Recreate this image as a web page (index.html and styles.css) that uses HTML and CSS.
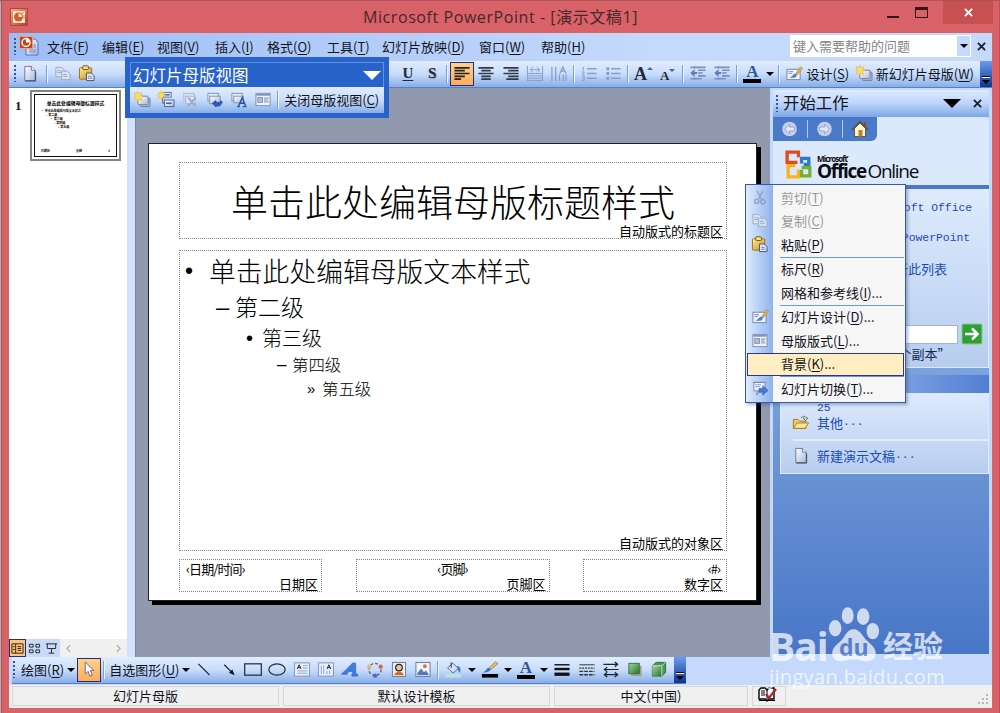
FILE: index.html
```
<!DOCTYPE html>
<html lang="zh-CN">
<head>
  <meta charset="UTF-8" />
  <meta name="viewport" content="width=device-width, initial-scale=1.0" />
  <title>Microsoft PowerPoint - [演示文稿1]</title>
  <link rel="stylesheet" href="styles.css">
</head>
<body>
  <!-- Icon sprite -->
  <svg class="sprite" xmlns="http://www.w3.org/2000/svg">
    <defs>
      <linearGradient id="gold" x1="0" y1="0" x2="1" y2="1"><stop offset="0" stop-color="#ffe98c"/><stop offset="1" stop-color="#d0901c"/></linearGradient>
      <linearGradient id="sheet" x1="0" y1="0" x2="1" y2="1"><stop offset="0" stop-color="#fff"/><stop offset="1" stop-color="#a9b9dc"/></linearGradient>
      <linearGradient id="green" x1="0" y1="0" x2="1" y2="1"><stop offset="0" stop-color="#a5d6a0"/><stop offset="1" stop-color="#27702c"/></linearGradient>
      <linearGradient id="red" x1="0" y1="0" x2="1" y2="1"><stop offset="0" stop-color="#f6b18b"/><stop offset="1" stop-color="#b8391a"/></linearGradient>
    </defs>
    <symbol id="i-app" viewBox="0 0 18 18"><rect x=".5" y=".5" width="17" height="17" fill="url(#red)" stroke="#b04a30"/><rect x="3" y="3" width="12" height="12" fill="#fbe6da"/><circle cx="8.5" cy="9" r="4.5" fill="#d35f2c"/><path d="M8.5 9V5.500A3.500 3.500 0 0 1 12 9z" fill="#ffe2c8"/><path d="M11 5h3M13 8h2M13 10h2" stroke="#d0805c"/></symbol>
    <symbol id="i-ppt" viewBox="0 0 20 20"><path d="M7 3h9l3 3v13H7z" fill="url(#sheet)" stroke="#5577b5"/><path d="M12 9h5M12 11h5M10 14h7M10 16h7" stroke="#6f90cb"/><rect x=".5" y=".5" width="13" height="12" fill="#c8431c" stroke="#f0a080"/><circle cx="7" cy="6.500" r="4" fill="none" stroke="#fff" stroke-width="1.500"/><path d="M7 6.500V3a3.500 3.500 0 0 1 3.500 3.500z" fill="#fff"/></symbol>
    <symbol id="i-new" viewBox="0 0 18 18"><path d="M3.500 1.500h7l4 4v11h-11z" fill="url(#sheet)" stroke="#6a7590"/><path d="M10.500 1.500v4h4" fill="#fff" stroke="#6a7590"/><path d="M4 17h11V7" fill="none" stroke="#3b4660"/></symbol>
    <symbol id="i-copy" viewBox="0 0 18 18"><g fill="#dbe3f3" stroke="#9aa7c4"><path d="M1.500 2.500h6l3 3v7h-9z"/><path d="M7.500 6.500h6l3 3v6h-9z"/></g><path d="M3 6h4M3 8h4M9 10h4M9 12h5" stroke="#9aa7c4"/></symbol>
    <symbol id="i-paste" viewBox="0 0 18 18"><rect x="1" y="3" width="13" height="12" rx="1" fill="url(#gold)" stroke="#9b701c"/><rect x="4.500" y=".8" width="6" height="4" rx="1" fill="#f6df88" stroke="#705418"/><path d="M8.500 8.500h5l3 3v5h-8z" fill="#e4ebf8" stroke="#45557d"/><path d="M10 12h4M10 14h5" stroke="#7187b5"/></symbol>
    <symbol id="i-cut" viewBox="0 0 18 18"><path d="M6 2l4.500 9M12 2L7.500 11" stroke="#8e9fc2" stroke-width="1.600" fill="none"/><g fill="none" stroke="#8e9fc2" stroke-width="1.700"><circle cx="5.500" cy="13" r="2.200"/><circle cx="12" cy="13.500" r="2.200"/></g></symbol>
    <symbol id="i-newmaster" viewBox="0 0 18 18"><rect x="7.500" y="7.500" width="10" height="9" rx="1" fill="#aebbd6" stroke="#6c7b9e"/><rect x="4.500" y="5.500" width="11" height="9" rx="1" fill="url(#sheet)" stroke="#71809f"/><path d="M4.500 0l1.200 3 3-1.200L7.500 4.700l3 1-3 1.200 1.200 3-3-1.200-1.200 2.500-1-2.600L.7 9.500 2 6.600 0 5.500 2 4.500 .8 1.800l2.800 1z" fill="#ffdc62" stroke="#e2a92b" stroke-width=".5"/></symbol>
    <symbol id="i-newtitle" viewBox="0 0 18 18"><rect x="6.500" y="1.500" width="8" height="5" fill="#e8eefb" stroke="#5b6f9c"/><path d="M5.500 7v6h2" stroke="#445f98" fill="none"/><rect x="7.500" y="9.500" width="10" height="7" fill="url(#sheet)" stroke="#53648c"/><path d="M9 13h6M8 4h5" stroke="#4468a8" stroke-width="1.500"/><path d="M4 0l1 2.300 2.500-1-1.200 2.500 2.200 1-2.500.8 1 2.400-2.200-1L4 9 3 6.800.8 8l1-2.500L0 4.500l2-.8-1-2.500 2.200 1z" fill="#ffdc62" stroke="#e2a92b" stroke-width=".5"/></symbol>
    <symbol id="i-delmaster" viewBox="0 0 18 18"><g fill="#dde5f5" stroke="#a8b4cd"><rect x="2.500" y="2.500" width="11" height="8"/><rect x="4.500" y="5.500" width="10" height="8"/></g><path d="M7 7l8 9M15 7l-8 9" stroke="#9aa9c8" stroke-width="2"/></symbol>
    <symbol id="i-keep" viewBox="0 0 18 18"><rect x="1.500" y="2.500" width="11" height="8" fill="#e6ecf8" stroke="#8190b0"/><rect x="3.500" y="5.500" width="11" height="8" fill="url(#sheet)" stroke="#8190b0"/><path d="M6 13l4-3v2h5v-2l2 2-3 4h-4v1z" fill="#2e5fb8" stroke="#173e88" stroke-width=".6"/></symbol>
    <symbol id="i-rename" viewBox="0 0 18 18"><rect x="1.500" y="2.500" width="11" height="8" fill="#e6ecf8" stroke="#8190b0"/><rect x="3.500" y="5.500" width="10" height="7" fill="url(#sheet)" stroke="#8190b0"/><path d="M7 16.500h3M13 16.500h4M8.500 16l4-9 3.500 9M10 13h5" fill="none" stroke="#2858a5" stroke-width="1.500"/></symbol>
    <symbol id="i-layout" viewBox="0 0 18 18"><rect x="1.500" y="2.500" width="15" height="13" fill="#edf2fc" stroke="#7f8dac"/><path d="M2 4h14" stroke="#8494b8" stroke-width="2"/><rect x="3.500" y="7" width="5" height="5" fill="#b1bfdf" stroke="#8191b6"/><path d="M10 7.500h5M10 9.500h4M10 11.500h5" stroke="#7788af"/></symbol>
    <symbol id="i-design" viewBox="0 0 18 18"><path d="M1.500 4.500h14v11h-14z" fill="#eef3fd" stroke="#7083ac"/><path d="M3 7h5M3 9h4" stroke="#8ba1ca" stroke-width="1.300"/><path d="M4 13c3 0 4-4 7-4l1 2c-1 3-5 3-8 2z" fill="#4d80d4"/><path d="M11 9l5-7 2 1.500-5.500 7z" fill="#e9b450" stroke="#a0762b" stroke-width=".6"/></symbol>
    <symbol id="i-trans" viewBox="0 0 18 18"><path d="M2.500 2.500h12v9h-12zM1.500 2.500h14M8 12l-3 4M6 12v4" fill="#e9effa" stroke="#7889ad"/><path d="M4 5h6M4 7h5" stroke="#8ea0c6"/><path d="M8 9h4V6l5.500 5-5.500 5v-3H8z" fill="#457bd6" stroke="#2956a6" stroke-width=".6"/></symbol>
    <symbol id="i-left" viewBox="0 0 18 18"><path d="M1 3h16M1 6h11M1 9h16M1 12h11M1 15h7" stroke="#222" stroke-width="1.700"/></symbol>
    <symbol id="i-center" viewBox="0 0 18 18"><path d="M1 3h16M4 6h10M1 9h16M4 12h10M4 15h10" stroke="#33394a" stroke-width="1.700"/></symbol>
    <symbol id="i-right" viewBox="0 0 18 18"><path d="M1 3h16M6 6h11M1 9h16M6 12h11M4 15h13" stroke="#33394a" stroke-width="1.700"/></symbol>
    <symbol id="i-dist" viewBox="0 0 18 18"><path d="M1 1v16M17 1v16M1 9h16M1 11.500h16M1 14h16M1 16.500h16M4 5h10M4 5l3-3M4 5l3 3M14 5l-3-3M14 5l-3 3" stroke="#8b9bc6" fill="none"/></symbol>
    <symbol id="i-vert" viewBox="0 0 18 18"><path d="M1.500 2v15M5.500 2v15M9.500 10v7M13.500 10v7M16.500 10v7M10 9l3-7 3.500 7M11 6.500h4.500" stroke="#8b9bc6" stroke-width="1.300" fill="none"/></symbol>
    <symbol id="i-num" viewBox="0 0 18 18"><path d="M7 4h10M7 9h10M7 14h10" stroke="#8b9bc6" stroke-width="1.500"/><path d="M3 2v4M1.500 7.500H4L2 10.500h2.500M1.500 12.500H4v4H1.500M2 14.500h2" stroke="#8b9bc6" fill="none"/></symbol>
    <symbol id="i-bul" viewBox="0 0 18 18"><path d="M7 4h10M7 9h10M7 14h10" stroke="#8b9bc6" stroke-width="1.500"/><path d="M2 4h3M2 9h3M2 14h3" stroke="#8b9bc6" stroke-width="3"/></symbol>
    <symbol id="i-outdent" viewBox="0 0 18 18"><path d="M1 2.500h16M9 5.500h8M9 8.500h5M9 11.500h8M1 14.500h12" stroke="#7c8fbd" stroke-width="1.700"/><path d="M5.500 1v16" stroke="#7c8fbd" stroke-dasharray="1 1"/><path d="M1 8.500l4-4v3h3v2H5v3z" fill="#6479b0"/></symbol>
    <symbol id="i-home" viewBox="0 0 18 18"><path d="M13 2h2v5h-2z" fill="#9c4427"/><path d="M3.500 8v8.500h11V8L9 3z" fill="#fff4c8" stroke="#5f5a4d"/><path d="M1 10l8-8 8 8" fill="none" stroke="#5b4d3e" stroke-width="1.600"/><rect x="7.500" y="10" width="4" height="6.500" fill="#b98137"/></symbol>
    <symbol id="i-nav" viewBox="0 0 18 18"><circle cx="9" cy="9" r="7.500" fill="#c3d0e8"/><path d="M9 4L4 9l5 5v-3h5V7H9z" stroke="#93a6cb" fill="#e3eaf7"/></symbol>
    <symbol id="i-folder" viewBox="0 0 20 18"><path d="M1.500 15.500V5.500h5l2 2h7v8z" fill="#f4c95e" stroke="#a37627"/><path d="M1.500 15.500l4-6h13l-4 6z" fill="#ffe392" stroke="#a37627"/><path d="M10 4c3-3 5-2 6 0h1.500L15 7l-2.500-3H14" fill="none" stroke="#6d6a48"/></symbol>
    <symbol id="i-line" viewBox="0 0 18 18"><path d="M3 3l12 12" stroke="#222" stroke-width="1.300"/></symbol>
    <symbol id="i-arrow" viewBox="0 0 18 18"><path d="M4 4l8 8" stroke="#222" stroke-width="1.300"/><path d="M15 15l-6-2.500L12.500 9z" fill="#111"/></symbol>
    <symbol id="i-rect" viewBox="0 0 18 18"><rect x=".2" y="3" width="17.600" height="12" fill="none" stroke="#252b38" stroke-width="1.300"/></symbol>
    <symbol id="i-oval" viewBox="0 0 18 18"><ellipse cx="9" cy="9" rx="8.600" ry="6" fill="none" stroke="#252b38" stroke-width="1.300"/></symbol>
    <symbol id="i-text" viewBox="0 0 18 18"><rect x="1" y="2" width="16" height="14" fill="#e9f0fd" stroke="#8292b3"/><path d="M4 8.500l2-4.500 2 4.500M4.500 7h3" stroke="#222" fill="none"/><path d="M10 5h5M10 7.500h5M4 10.500h11M4 13h11" stroke="#8da1c8"/></symbol>
    <symbol id="i-vtext" viewBox="0 0 18 18"><rect x="1" y="2" width="16" height="14" fill="#e9f0fd" stroke="#8292b3"/><path d="M10 8.500l2-4.500 2 4.500M10.500 7h3" stroke="#222" fill="none"/><path d="M4 5v9M6.500 5v9M10 10v4M13 10v4" stroke="#8da1c8"/></symbol>
    <symbol id="i-wordart" viewBox="0 0 18 18"><path d="M0 14L12 2l3 .5V13l2 1v2h-6v-2l1-1v-2H8l-2 2v1z M9.500 9H12V6.500z" fill="#3f7ee0" stroke="#2b5ab5" stroke-width=".7" fill-rule="evenodd"/></symbol>
    <symbol id="i-diagram" viewBox="0 0 18 18"><circle cx="9" cy="9" r="6.500" fill="none" stroke="#5a668a" stroke-width="1.500" stroke-dasharray="3 2"/><circle cx="3" cy="6" r="2.300" fill="#e3ba55"/><circle cx="15" cy="6" r="2.300" fill="#d7673e"/><circle cx="9" cy="15.500" r="2.300" fill="#5a66c9"/></symbol>
    <symbol id="i-clip" viewBox="0 0 18 18"><rect x="2" y="1.500" width="14" height="15" fill="#e9effa" stroke="#66789f"/><path d="M4 15c0-5 10-5 10 0z" fill="#d86c1f"/><circle cx="9" cy="7" r="3.500" fill="#f3c58d" stroke="#30251c" stroke-width="1.300"/></symbol>
    <symbol id="i-pic" viewBox="0 0 18 18"><rect x="1.500" y="1.500" width="15" height="15" fill="#eef4ff" stroke="#66789f"/><circle cx="11" cy="5.500" r="2" fill="#e76b2f"/><path d="M3 15V13l4-5 3 4 2-2 3 4v1z" fill="#5677b6"/></symbol>
    <symbol id="i-bucket" viewBox="0 0 20 18"><path d="M4 7l6-5 6 6-6 5z" fill="#d6e0f4" stroke="#52658e"/><path d="M8 7V1" stroke="#3f4f73" stroke-width="1.300"/><path d="M14 5c5 0 5 4 3.500 8L15 9z" fill="#4b7ccc"/><rect x="1" y="14" width="18" height="4" fill="#b9e1df"/></symbol>
    <symbol id="i-pen" viewBox="0 0 20 18"><path d="M2 12c3 1 7 0 9-3l-2-2c-3 0-3 4-7 5z" fill="#3e73ca"/><path d="M9 7l7-6.500 3 2-8 6.500z" fill="#f0c148" stroke="#5f6f96" stroke-width=".7"/><rect x="1" y="14" width="18" height="4" fill="#000"/></symbol>
    <symbol id="i-lines" viewBox="0 0 18 18"><path d="M1 4h16" stroke="#111" stroke-width="1.500"/><path d="M1 8.500h16" stroke="#111" stroke-width="2.500"/><path d="M1 14h16" stroke="#111" stroke-width="3.500"/></symbol>
    <symbol id="i-dash" viewBox="0 0 18 18"><path d="M1 4h16" stroke="#333"/><path d="M1 7.500h16" stroke="#333" stroke-width="1.500" stroke-dasharray="2 1"/><path d="M1 11h16M1 14.500h16" stroke="#333" stroke-width="1.500" stroke-dasharray="4 1"/></symbol>
    <symbol id="i-arrows" viewBox="0 0 18 18"><path d="M1 3.500h15M2 9h15M2 14.500h14M13 1l3 2.500L13 6M5 6.500L2 9l3 2.500M5 12l-3 2.500L5 17M13 12l3 2.500-3 2.500" stroke="#222" fill="none" stroke-width="1.300"/></symbol>
    <symbol id="i-shadow" viewBox="0 0 18 18"><rect x="5" y="5" width="11" height="11" fill="#95a39c"/><rect x="2.500" y="2.500" width="11" height="11" fill="url(#green)" stroke="#39733b"/></symbol>
    <symbol id="i-cube" viewBox="0 0 18 18"><path d="M2 5l4-3.500h10V12l-4 4H2z" fill="#4e9654" stroke="#2e6836"/><path d="M2 5h10v11H2z" fill="url(#green)"/><path d="M2 5h10l4-3.500M12 5v11" stroke="#c4e5be" fill="none"/></symbol>
    <symbol id="i-spell" viewBox="0 0 20 16"><path d="M1 3l2-2h4l2 2 2-2h5v11h-5l-2 2-2-2H1z" fill="#fff" stroke="#000" stroke-width="1.400"/><path d="M9 3v10M1 13.500h16M3 4h4M3 6h4M3 8h4" stroke="#000"/><path d="M8 7l3 4 7-9" stroke="#b3202a" stroke-width="2.200" fill="none"/></symbol>
  </svg>

  <div class="window">
    <header class="titlebar">
      <svg class="app-icon"><use href="#i-app"/></svg>
      <h1>Microsoft PowerPoint - [演示文稿1]</h1>
      <div class="win-buttons">
        <span class="min"></span>
        <span class="max"></span>
        <span class="win-close"><svg viewBox="0 0 10 10"><path d="M1 1l8 8M9 1l-8 8"/></svg></span>
      </div>
    </header>

    <div class="client">
      <nav class="menubar">
        <i class="grip"></i>
        <svg class="ppt-icon"><use href="#i-ppt"/></svg>
        <ul>
          <li>文件(<u>F</u>)</li>
          <li>编辑(<u>E</u>)</li>
          <li>视图(<u>V</u>)</li>
          <li>插入(<u>I</u>)</li>
          <li>格式(<u>O</u>)</li>
          <li>工具(<u>T</u>)</li>
          <li>幻灯片放映(<u>D</u>)</li>
          <li>窗口(<u>W</u>)</li>
          <li>帮助(<u>H</u>)</li>
        </ul>
        <div class="help-box"><span>键入需要帮助的问题</span><b><i class="caret"></i></b></div>
        <svg class="x" viewBox="0 0 10 10"><path d="M1 1l8 8M9 1l-8 8"/></svg>
      </nav>

      <div class="toolbar">
        <i class="grip"></i>
        <span class="cell"><svg><use href="#i-new"/></svg></span>
        <i class="sep"></i>
        <span class="cell"><svg><use href="#i-copy"/></svg></span>
        <span class="cell"><svg><use href="#i-paste"/></svg></span>
        <div class="tools-right">
          <span class="cell glyph"><u>U</u></span>
          <span class="cell glyph shade">S</span>
          <i class="sep"></i>
          <span class="cell active"><svg><use href="#i-left"/></svg></span>
          <span class="cell"><svg><use href="#i-center"/></svg></span>
          <span class="cell"><svg><use href="#i-right"/></svg></span>
          <span class="cell"><svg><use href="#i-dist"/></svg></span>
          <span class="cell"><svg><use href="#i-vert"/></svg></span>
          <i class="sep"></i>
          <span class="cell"><svg><use href="#i-num"/></svg></span>
          <span class="cell"><svg><use href="#i-bul"/></svg></span>
          <i class="sep"></i>
          <span class="cell glyph big">A<sup class="up"></sup></span>
          <span class="cell glyph small">A<sup class="down"></sup></span>
          <i class="sep"></i>
          <span class="cell"><svg><use href="#i-outdent"/></svg></span>
          <span class="cell"><svg><use href="#i-outdent"/></svg></span>
          <i class="sep"></i>
          <span class="cell"><b class="font-color">A</b></span>
          <span class="drop"><i class="caret"></i></span>
          <i class="sep"></i>
          <span class="cell"><svg><use href="#i-design"/></svg></span>
          <span class="label design">设计(<u>S</u>)</span>
          <span class="cell"><svg><use href="#i-newmaster"/></svg></span>
          <span class="label">新幻灯片母版(<u>W</u>)</span>
        </div>
        <span class="cap"><i></i><i class="caret"></i></span>
      </div>

      <main>
        <aside class="outline">
          <div class="thumbs">
            <b>1</b>
            <div class="thumb">
              <div class="thumb-page">
                <h6>单击此处编辑母版标题样式</h6>
                <p>• 单击此处编辑母版文本样式</p>
                <p class="t2">– 第二级</p>
                <p class="t3">• 第三级</p>
                <p class="t4">– 第四级</p>
                <p class="t5">» 第五级</p>
                <footer><span>日期区</span><span>页脚</span><span>#</span></footer>
              </div>
            </div>
          </div>
          <div class="views">
            <span class="on"><svg viewBox="0 0 14 14"><path d="M1 2h12v10H1zM5 2v10M7 5h4M7 7h4M7 9h4M2 5h2M2 8h2"/></svg></span>
            <span><svg viewBox="0 0 14 14"><path d="M1.500 2.500h4v3h-4zM8.500 2.500h4v3h-4zM1.500 8.500h4v3h-4zM8.500 8.500h4v3h-4z"/></svg></span>
            <span><svg viewBox="0 0 14 14"><path d="M1 2h12M2.500 2v5h9V2M7 7v5M4 12h6"/></svg></span>
            <div class="scroll">
              <svg viewBox="0 0 6 10"><path d="M5 1L1 5l4 4"/></svg>
              <svg viewBox="0 0 6 10"><path d="M1 1l4 4-4 4"/></svg>
            </div>
          </div>
        </aside>

        <section class="canvas">
          <article class="slide">
            <div class="ph ph-title">
              <h2>单击此处编辑母版标题样式</h2>
              <small>自动版式的标题区</small>
            </div>
            <div class="ph ph-body">
              <ul>
                <li class="l1"><b>•</b>单击此处编辑母版文本样式</li>
                <li class="l2"><b>–</b>第二级</li>
                <li class="l3"><b>•</b>第三级</li>
                <li class="l4"><b>–</b>第四级</li>
                <li class="l5"><b>»</b>第五级</li>
              </ul>
              <small>自动版式的对象区</small>
            </div>
            <div class="ph-row">
              <div class="ph date"><p>‹日期/时间›</p><small>日期区</small></div>
              <div class="ph foot"><p>‹页脚›</p><small>页脚区</small></div>
              <div class="ph num"><p>‹#›</p><small>数字区</small></div>
            </div>
          </article>
        </section>

        <aside class="taskpane">
          <header>
            <i class="grip"></i>
            <h3>开始工作</h3>
            <i class="caret large"></i>
            <svg class="x" viewBox="0 0 10 10"><path d="M1 1l8 8M9 1l-8 8"/></svg>
          </header>
          <div class="nav-row">
            <div class="nav">
              <svg viewBox="0 0 35 18"><use href="#i-nav" x="8" width="18" height="18"/></svg>
              <svg viewBox="0 0 35 18"><g transform="translate(35 0) scale(-1 1)"><use href="#i-nav" x="9" width="18" height="18"/></g></svg>
              <svg viewBox="0 0 35 18"><use href="#i-home" x="8" width="18" height="18"/></svg>
            </div>
          </div>
          <div class="logo">
            <svg viewBox="0 0 30 30">
              <g fill="none" stroke-width="3.200">
                <path d="M13 13H3V3h11v5" stroke="#df4a1f"/>
                <path d="M17 14V9h7v6h-5" stroke="#2f78cf"/>
                <path d="M11 16H4v11h10v-7" stroke="#f4b61c"/>
                <path d="M17 18h8v8h-8v-6" stroke="#76b02c"/>
              </g>
            </svg>
            <div><span>Microsoft<sup>•</sup></span><p><b>Office</b> Online</p></div>
          </div>
          <div class="pane-body">
            <div class="card online">
              <a>连接到 <code>Microsoft Office</code></a>
              <a>获取有关使用 <code>PowerPoint</code></a>
              <a>自动从网站更新此列表</a>
              <div class="search"><span class="field"></span><svg viewBox="0 0 22 22"><rect x="1" y="1" width="20" height="20" rx="1"/><path d="M4 11h12M11 5.500l5.500 5.500-5.500 5.500"/></svg></div>
              <p>示例:“打印多个副本”</p>
            </div>
            <div class="card-head"></div>
            <div class="card files">
              <a class="recent"><code>25</code></a>
              <a><svg><use href="#i-folder"/></svg>其他<code class="dots">...</code></a>
              <hr>
              <a><svg><use href="#i-new"/></svg>新建演示文稿<code class="dots">...</code></a>
            </div>
          </div>
        </aside>
      </main>

      <div class="drawbar">
        <div class="draw-tools">
          <i class="grip"></i>
          <span class="label">绘图(<u>R</u>)</span>
          <span class="drop"><i class="caret"></i></span>
          <span class="cell active"><svg viewBox="0 0 18 18"><path d="M5 1v13l3-3 2 5 2.500-1-2-5H14z" fill="#fff" stroke="#5c6c90"/></svg></span>
          <i class="sep"></i>
          <span class="label shapes">自选图形(<u>U</u>)</span>
          <span class="drop"><i class="caret"></i></span>
          <span class="cell"><svg><use href="#i-line"/></svg></span>
          <span class="cell"><svg><use href="#i-arrow"/></svg></span>
          <span class="cell"><svg><use href="#i-rect"/></svg></span>
          <span class="cell"><svg><use href="#i-oval"/></svg></span>
          <span class="cell"><svg><use href="#i-text"/></svg></span>
          <span class="cell"><svg><use href="#i-vtext"/></svg></span>
          <span class="cell"><svg><use href="#i-wordart"/></svg></span>
          <span class="cell"><svg><use href="#i-diagram"/></svg></span>
          <span class="cell"><svg><use href="#i-clip"/></svg></span>
          <span class="cell"><svg><use href="#i-pic"/></svg></span>
          <i class="sep"></i>
          <span class="cell"><svg><use href="#i-bucket"/></svg></span>
          <span class="drop"><i class="caret"></i></span>
          <span class="cell"><svg><use href="#i-pen"/></svg></span>
          <span class="drop"><i class="caret"></i></span>
          <span class="cell"><b class="font-color">A</b></span>
          <span class="drop"><i class="caret"></i></span>
          <span class="cell"><svg><use href="#i-lines"/></svg></span>
          <span class="cell"><svg><use href="#i-dash"/></svg></span>
          <span class="cell"><svg><use href="#i-arrows"/></svg></span>
          <span class="cell"><svg><use href="#i-shadow"/></svg></span>
          <span class="cell"><svg><use href="#i-cube"/></svg></span>
          <span class="cap"><i></i><i class="caret"></i></span>
        </div>
      </div>

      <footer class="status">
        <span>幻灯片母版</span>
        <span>默认设计模板</span>
        <span>中文(中国)</span>
        <span><svg><use href="#i-spell"/></svg></span>
        <svg class="resize" viewBox="0 0 12 12"><path d="M9 0h2v2H9zM5 4h2v2H5zM9 4h2v2H9zM1 8h2v2H1zM5 8h2v2H5zM9 8h2v2H9z"/></svg>
      </footer>
    </div>
  </div>

  <!-- Floating master view toolbar -->
  <div class="float-bar">
    <div class="float-title">幻灯片母版视图<i class="caret large"></i></div>
    <div class="float-tools">
      <span class="cell"><svg><use href="#i-newmaster"/></svg></span>
      <span class="cell"><svg><use href="#i-newtitle"/></svg></span>
      <span class="cell"><svg><use href="#i-delmaster"/></svg></span>
      <span class="cell"><svg><use href="#i-keep"/></svg></span>
      <span class="cell"><svg><use href="#i-rename"/></svg></span>
      <span class="cell"><svg><use href="#i-layout"/></svg></span>
      <i class="sep"></i>
      <span class="label">关闭母版视图(<u>C</u>)</span>
    </div>
  </div>

  <!-- Context menu -->
  <ul class="context">
    <li class="off"><svg><use href="#i-cut"/></svg>剪切(<u>T</u>)</li>
    <li class="off"><svg><use href="#i-copy"/></svg>复制(<u>C</u>)</li>
    <li><svg><use href="#i-paste"/></svg>粘贴(<u>P</u>)</li>
    <li class="line"></li>
    <li><svg></svg>标尺(<u>R</u>)</li>
    <li><svg></svg>网格和参考线(<u>I</u>)...</li>
    <li class="line"></li>
    <li><svg><use href="#i-design"/></svg>幻灯片设计(<u>D</u>)...</li>
    <li><svg><use href="#i-layout"/></svg>母版版式(<u>L</u>)...</li>
    <li class="hover"><svg></svg>背景(<u>K</u>)...</li>
    <li class="line"></li>
    <li><svg><use href="#i-trans"/></svg>幻灯片切换(<u>T</u>)...</li>
  </ul>

  <div class="watermark">
    <div class="brand">
      <span class="bai">Bai</span>
      <span class="paw">
        <svg viewBox="0 0 54 58"><g fill="#fff"><ellipse cx="8" cy="23" rx="6.500" ry="8.500"/><ellipse cx="21" cy="10" rx="6.200" ry="8.700"/><ellipse cx="37" cy="11" rx="6.500" ry="8.700"/><ellipse cx="47" cy="26" rx="6.500" ry="8.500"/><path d="M27 24c7 0 9 7 14 12 5 4 9 8 9 13 0 8-8 9-13 8-7-2-13-2-20 0-6 1-12-1-12-8 0-6 5-9 9-13 5-5 6-12 13-12z"/></g></svg>
        <em>du</em>
      </span>
      <span class="jy">经验</span>
    </div>
    <p>jingyan.baidu.com</p>
  </div>
</body>
</html>
```
FILE: styles.css
```
* { margin: 0; padding: 0; box-sizing: border-box; }
body {
  width: 1000px;
  height: 713px;
  overflow: hidden;
  position: relative;
  font-family: 'Noto Sans CJK SC', sans-serif;
  font-size: 13px;
  line-height: 1;
  color: #10131c;
  white-space: nowrap;
}
ul { list-style: none; }
i, em { font-style: normal; }
svg { display: block; overflow: visible; }
u { text-underline-offset: 2px; text-decoration-thickness: 1px; }
.sprite { position: absolute; width: 0; height: 0; }

/* Window frame */
.window {
  height: 713px;
  padding: 0 8px 6px 9px;
  background: #d96168;
  border-top: 1px solid #b0525a;
  box-shadow: inset 1px 0 #b4b0b4, inset 2px 0 #a8535b, inset -1px 0 #b8515a;
}
.titlebar {
  position: relative;
  height: 32px;
  display: flex;
  align-items: center;
  justify-content: center;
}
.titlebar h1 {
  font-family: 'Open Sans', 'Noto Sans CJK SC', sans-serif;
  font-size: 16px;
  font-weight: 400;
  letter-spacing: 0.57px;
  padding-bottom: 1px;
  color: #47282b;
}
.app-icon { position: absolute; left: 1px; top: 7px; width: 18px; height: 18px; }
.win-buttons { position: absolute; right: -1px; top: 0; display: flex; }
.min { width: 12px; height: 2px; margin: 15px 16px 0 0; background: #2d1719; }
.max { width: 13px; height: 11px; margin: 6px 15px 0 0; border: 1px solid #2d1719; border-top-width: 3px; }
.win-close { width: 50px; height: 23px; background: #c75050; display: flex; align-items: center; justify-content: center; }
.win-close svg { width: 9px; height: 9px; fill: none; stroke: #fff; stroke-width: 2; }

.client { height: 674px; background: #f0f0f0; }
.grip {
  width: 2px;
  height: 17px;
  flex: none;
  background: repeating-linear-gradient(#35549e 0 2px, transparent 2px 4px);
}
.caret { width: 0; height: 0; border: 4px solid transparent; border-top: 4px solid #000; border-bottom: 0; }
.caret.large { border-width: 9px 9px 0; }
.x { width: 9px; height: 9px; fill: none; stroke: #1b1f2c; stroke-width: 2; }

/* Menu bar */
.menubar {
  height: 28px;
  padding: 0 6px 2px 5px;
  display: flex;
  align-items: center;
  background: linear-gradient(90deg, #9dbdf6, #c4d9fb 65%);
}
.ppt-icon { width: 20px; height: 20px; margin: 0 8px 0 3px; }
.menubar ul { display: grid; grid-template-columns: 55px 55px 58px 52px 60px 55px 97px 62px 60px; flex: 1; }
.help-box { width: 181px; height: 22px; background: #fff; display: flex; align-items: center; justify-content: space-between; margin-right: 6px; padding: 1px 1px 1px 3px; color: #858585; }
.help-box span { padding-bottom: 2px; }
.help-box b { width: 13px; height: 20px; background: #c4d9fb; display: flex; align-items: center; justify-content: center; }

/* Toolbars */
.toolbar, .draw-tools, .float-tools { display: flex; align-items: center; background: linear-gradient(#e1edfe, #c8dcfa 50%, #86aee8); }
.toolbar { height: 27px; padding: 0 0 1px 5px; border-bottom: 1px solid #5a80c4; }
.label { padding-bottom: 1px; }
.cell { width: 24.2px; height: 24px; flex: none; display: flex; align-items: center; justify-content: center; }
.cell svg { width: 18px; height: 17px; }
.toolbar > .cell:nth-child(2) { margin-left: 2px; }
.toolbar > .sep:nth-child(3) { margin: 0 1px 0 2px; }
.sep { width: 6px; height: 18px; flex: none; background: linear-gradient(90deg, transparent 2px, #7f9dd6 2px 3px, #eef5ff 3px 4px, transparent 4px); }
.active { background: linear-gradient(#ffd28b, #ffac57); border: 1px solid #252e86; }
.tools-right { display: flex; align-items: center; margin-left: auto; }
.glyph { font-family: 'Liberation Serif', serif; font-weight: 700; font-size: 15px; color: #222a3a; }
.shade { text-shadow: 1px 1px 1px #8c9099; }
.big { font-size: 18px; }
.small { font-size: 13px; padding-top: 4px; }
.glyph sup { width: 0; height: 0; border: 3px solid transparent; margin-bottom: 11px; }
.glyph .up { border-top: 0; border-bottom-color: #46649e; }
.glyph .down { border-bottom: 0; border-top-color: #46649e; }
.font-color { width: 18px; height: 18px; border-bottom: 4px solid #000; text-align: center; font: 700 17px/14px 'Liberation Serif', serif; color: #32569c; }
.drop { width: 12px; flex: none; display: flex; justify-content: center; }
.design { width: 45px; }
.cap {
  width: 12px;
  height: 26px;
  flex: none;
  display: flex;
  flex-direction: column;
  align-items: center;
  justify-content: flex-end;
  gap: 2px;
  padding-bottom: 3px;
  background: linear-gradient(#6d9bea, #0b3494);
}
.cap i:first-child { width: 8px; height: 2px; background: #000; border-bottom: 1px solid #fff; }
.toolbar .cap { margin-left: 6px; }

/* Work area */
main { height: 569px; display: flex; background: #9199ae; }
.outline { width: 126px; border-right: 8px solid #d3e2fa; background: #fff; display: flex; flex-direction: column; justify-content: space-between; }
.thumbs { display: flex; padding: 2px 0 0 6px; }
.thumbs b { width: 15px; padding-top: 8px; font: 700 13px 'Liberation Serif', serif; }
.thumb { width: 91px; height: 71px; padding: 2px; border: 2px solid #848484; background: #fff; }
.thumb-page { height: 63px; border: 1px solid #111; padding: 5px 6px 0; font-size: 3px; font-weight: 700; color: #000; line-height: 4.3px; }
.thumb-page h6 { font-size: 4.8px; line-height: 6px; text-align: center; margin-bottom: 3px; }
.thumb-page p { line-height: 4px; }
.t2 { padding-left: 5px; }
.t3 { padding-left: 9px; }
.t4 { padding-left: 13px; }
.t5 { padding-left: 17px; }
.thumb-page footer { display: flex; justify-content: space-between; margin-top: 20px; }
.views { height: 18px; display: flex; background: #c8dafa; }
.views span { width: 17px; display: flex; align-items: center; justify-content: center; }
.views .on { background: #ffc476; border: 1px solid #252e86; }
.views svg { width: 13px; height: 13px; fill: none; stroke: #222; }
.scroll { flex: 1; display: flex; align-items: center; justify-content: space-between; padding: 0 6px; background: #f0f0f0; }
.scroll svg { width: 5px; height: 9px; stroke: #aaa; stroke-width: 1.4; }

.canvas { flex: 1; padding: 55px 0 0 12px; border-left: 1px solid #7c879f; }
.slide {
  width: 609px;
  height: 458px;
  padding: 18px 29px 0 30px;
  border: 1px solid #222;
  background: #fff;
  box-shadow: 4px 4px #000;
  color: #000;
}
.ph { border: 1px dotted #858585; display: flex; flex-direction: column; justify-content: space-between; }
.ph small { font-size: 13px; line-height: 14px; text-align: right; padding-right: 3px; }
.ph h2 { font-size: 37px; line-height: 37px; font-weight: 300; text-align: center; padding-top: 20px; }
.ph-title { height: 77px; }
.ph-body { height: 301px; margin-top: 11px; }
.ph-body li { display: flex; align-items: center; font-weight: 300; }
.ph-body b { font-family: 'Liberation Sans', sans-serif; }
.l1 { font-size: 26.8px; height: 38px; padding: 2px 0 0 5px; }
.l1 b { width: 24px; font-size: 23px; }
.l2 { font-size: 23px; height: 35px; padding-left: 36px; }
.l2 b { width: 19px; font-size: 24px; }
.l3 { font-size: 20px; height: 27px; padding-left: 66px; }
.l3 b { width: 16px; }
.l4 { font-size: 16.4px; height: 26px; padding-left: 97px; }
.l4 b { width: 15px; font-size: 17px; }
.l5 { font-size: 16.4px; height: 23px; padding-left: 127px; }
.l5 b { width: 15px; font-weight: 400; font-size: 15px; }
.ph-row { display: grid; grid-template-columns: 143px 194px 144px; justify-content: space-between; margin-top: 8px; }
.ph-row .ph { height: 33px; }
.ph-row p { font-size: 13px; line-height: 16px; padding: 1px 6px 0; letter-spacing: -0.9px; }
.foot p { text-align: center; }
.num p { text-align: right; }

/* Task pane */
.taskpane { width: 222px; padding: 2px 3px 3px 0; border-left: 3px solid #c4d9fb; background: #c4d9fb; display: flex; flex-direction: column; }
.taskpane header { height: 27px; padding: 0 7px 0 3px; display: flex; align-items: center; background: linear-gradient(#dfebfd, #bdd4fa 50%, #7da6e4); }
.taskpane h3 { flex: 1; padding: 0 0 2px 5px; font-size: 16.4px; font-weight: 400; }
.taskpane .caret { margin-right: 12px; }
.nav-row { background: linear-gradient(90deg, #7da6e4, #dce9fd 50%); border-top-right-radius: 6px; }
.nav { width: 104px; height: 24px; display: flex; align-items: center; background: #4a79ca; border-bottom-right-radius: 6px; }
.nav svg { width: 35px; height: 18px; border-right: 1px solid #b3cbf3; }
.nav svg:last-child { border: 0; }
.nav-row { background: #dce9fd; }
.logo { height: 48px; padding: 8px 0 0 11px; display: flex; background: #dce9fd; border-bottom: 4px solid #4a79ca; color: #0c0c10; }
.logo svg { width: 31px; height: 31px; }
.logo div { padding-left: 2px; font-family: 'Open Sans', sans-serif; }
.logo span { display: block; font-size: 8px; font-weight: 700; line-height: 7px; padding-top: 4px; letter-spacing: -0.9px; }
.logo sup { font-size: 4px; }
.logo p { font-size: 19px; line-height: 18px; letter-spacing: -1.3px; word-spacing: -2px; }
.pane-body { flex: 1; padding-left: 7px; background: linear-gradient(#9fbdf0, #779eda 45%, #4876c7); }
.card { background: linear-gradient(#deebfd, #b7cdef); border: 1px solid #deebfd; border-top: 0; color: #1c4ab8; }
.card a, .card p { display: flex; align-items: center; padding-left: 36px; }
code { font: 11.4px 'Liberation Mono', monospace; white-space: pre; }
.online { height: 179px; padding-top: 4px; }
.online a { height: 30px; }
.online a code { padding-left: 6.8px; }
.search { display: flex; margin: 40px 5px 0 36px; height: 22px; align-items: center; justify-content: space-between; }
.field { width: 141px; height: 19px; border: 1px solid #9db5dc; background: #fff; }
.search svg { width: 22px; height: 22px; fill: none; stroke: #fff; stroke-width: 2.6; }
.search rect { fill: #2f9f34; stroke: #8fc894; stroke-width: 1; }
.online p { height: 17px; color: #172850; }
.card-head { height: 18px; margin-top: 7px; background: linear-gradient(90deg, #b7cdf6, #527ed2); }
.files { height: 81px; padding-top: 9px; }
.files a { height: 21px; }
.files .recent { height: 11px; }
.files a:nth-child(2) { height: 19px; }
.files hr { height: 2px; border: 0; margin: 7px 0 4px 12px; background: #e3eefd; }
.files a svg { width: 18px; height: 17px; margin: 0 7px 0 -25px; }
.files .dots { line-height: 13px; }

/* Drawing toolbar */
.drawbar { height: 28px; padding-left: 3px; background: #c4d9fb; }
.draw-tools { width: 674px; height: 27px; padding-bottom: 1px; border-bottom: 1px solid #5a80c4; }
.draw-tools .label { width: 44px; }
.draw-tools .grip { margin: 0 6px 0 1px; }
.draw-tools .shapes { width: 73px; padding-left: 2px; }
.draw-tools .cell { width: 24.3px; }
.draw-tools .cap { margin-left: auto; }

/* Status bar */
.status { height: 23px; padding: 1px 3px; display: flex; gap: 4px; background: #f0f0f0; }
.status span { width: 267px; height: 20px; padding-bottom: 2px; border: 1px solid #d7d7d7; display: flex; align-items: center; justify-content: center; }
.status span:nth-child(3) { width: 194px; }
.status span:nth-child(4) { width: 34px; padding-right: 3px; }
.status span svg { width: 20px; height: 16px; }
.resize { width: 12px; height: 12px; margin: 8px 0 0 auto; fill: #b7b7b7; }

/* Floating toolbar */
.float-bar { position: absolute; left: 125px; top: 57px; width: 264px; height: 61px; padding: 5px; background: #2863cb; }
.float-title { height: 25px; padding: 0 3px 0 2px; display: flex; align-items: center; justify-content: space-between; font-size: 16.5px; color: #fff; border: 1px solid #6490df; border-bottom: 0; }
.float-title .caret { border-top-color: #fff; margin-right: -1px; }
.float-tools { height: 26px; padding-bottom: 1px; }
.float-tools .label { margin-left: 3px; }

/* Context menu */
.context {
  position: absolute;
  left: 745px;
  top: 184px;
  width: 161px;
  height: 219px;
  padding: 1px 1px 0;
  border: 1px solid #3557b4;
  background: linear-gradient(90deg, #dfebfe, #8fb2ec 27px, #f6f6f6 27px);
  box-shadow: 2px 2px 3px rgba(40, 60, 110, 0.35);
}
.context li { height: 23.5px; display: flex; align-items: center; padding: 0 0 1px 3px; border: 1px solid transparent; }
.context li svg { width: 18px; height: 17px; margin-right: 12px; }
.context .line { height: 1px; margin: 0 0 0 33px; padding: 0; border: 0; background: #7196d8; }
.context .off { color: #999; }
.off svg { opacity: 0.85; }
.context .hover { background: #ffeec2; border-color: #2c3590; }

/* Watermark */
.watermark { position: absolute; left: 769px; top: 605px; width: 178px; color: #fff; opacity: 0.72; }
.brand { display: flex; height: 58px; align-items: flex-end; }
.bai { width: 58px; font: 700 39px/34px 'Open Sans', sans-serif; letter-spacing: -1px; }
.paw { position: relative; width: 56px; height: 57px; }
.paw svg { width: 53px; height: 56px; }
.paw em { position: absolute; left: 12px; top: 29px; font: 700 23px/24px 'Open Sans', sans-serif; color: #5c85ce; }
.jy { font-size: 30px; line-height: 37px; font-weight: 700; }
.watermark p { font: 20px/24px 'Open Sans', sans-serif; letter-spacing: 0.35px; padding-top: 2px; }
```
